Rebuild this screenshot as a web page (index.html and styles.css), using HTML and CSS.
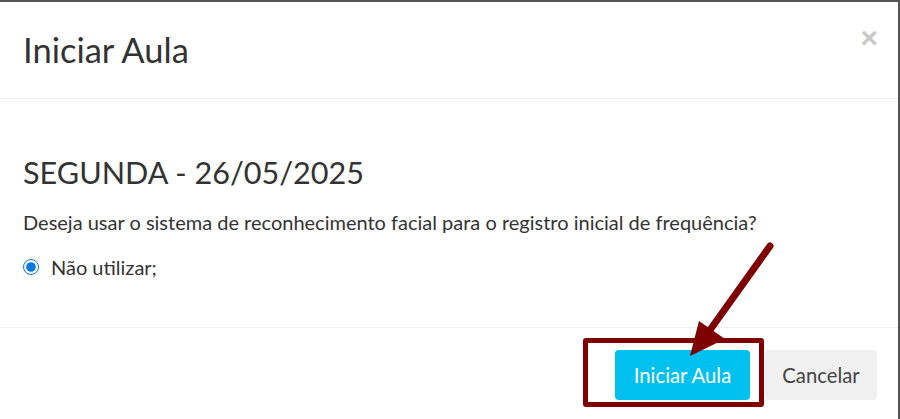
FILE: index.html
```html
<!DOCTYPE html>
<html>
<head>
  <title>Iniciar Aula</title>
  <link rel="stylesheet" href="styles.css">
</head>
<body>
  <div class="modal">
    <div class="modal-header">
      <h4 class="modal-title">Iniciar Aula</h4>
      <button class="close" type="button">&times;</button>
    </div>
    <div class="modal-body">
      <h3 class="day-title">SEGUNDA - 26/05/2025</h3>
      <p class="question">Deseja usar o sistema de reconhecimento facial para o registro inicial de frequência?</p>
      <label class="radio-option">
        <input type="radio" name="facial" checked>
        <span>Não utilizar;</span>
      </label>
    </div>
    <div class="modal-footer">
      <button class="btn btn-info" type="button">Iniciar Aula</button>
      <button class="btn btn-default" type="button">Cancelar</button>
    </div>

    <!-- highlight drawn over the screenshot -->
    <div class="highlight-box"></div>
    <svg class="highlight-arrow" width="120" height="130" viewBox="0 0 120 130">
      <line x1="100" y1="16" x2="40" y2="100" stroke="#7f0000" stroke-width="7" stroke-linecap="round"/>
      <polygon points="20,126 29,91 55,109" fill="#7f0000"/>
    </svg>
  </div>
</body>
</html>
```

FILE: styles.css
```css
body {
  margin: 0;
  padding: 0;
  background-color: #fff;
  font-family: "Lato", "Liberation Sans", sans-serif;
  color: #333;
}

.modal {
  position: relative;
  width: 898px;
  height: 417px;
  border-top: 2px solid #555;
  border-right: 2px solid #555;
  background-color: #fff;
}

.modal-header {
  display: flex;
  justify-content: space-between;
  align-items: flex-start;
  height: 96px;
  padding: 0 23px;
  border-bottom: 1px solid #f0f0f0;
}

.modal-title {
  margin: 0;
  padding-top: 28px;
  font-size: 34.5px;
  font-weight: normal;
  line-height: 40px;
  color: #333;
}

.close {
  margin-top: 21px;
  margin-right: -3px;
  padding: 0;
  border: none;
  background: none;
  font-family: "Liberation Sans", sans-serif;
  font-size: 30px;
  font-weight: bold;
  line-height: 30px;
  color: #c8c8c8;
  cursor: pointer;
}

.modal-body {
  height: 228px;
  padding: 0 23px;
  border-bottom: 1px solid #f0f0f0;
}

.day-title {
  margin: 0;
  padding-top: 54px;
  font-size: 30.6px;
  font-weight: normal;
  line-height: 40px;
}

.question {
  margin: 16px 0 0;
  font-size: 20px;
  line-height: 26px;
}

.radio-option {
  display: flex;
  align-items: center;
  gap: 12px;
  margin-top: 20px;
  font-size: 20px;
  line-height: 24px;
}

.radio-option input {
  width: 16px;
  height: 16px;
  margin: 0;
  accent-color: #0a77e0;
}

.modal-footer {
  display: flex;
  justify-content: flex-end;
  gap: 15px;
  padding: 22px 21px 0;
}

.btn {
  height: 50px;
  padding: 0;
  border: none;
  border-radius: 4px;
  font-family: "Lato", "Liberation Sans", sans-serif;
  font-size: 20.3px;
  cursor: pointer;
}

.btn-info {
  width: 135px;
  background-color: #00c0ef;
  color: #fff;
}

.btn-default {
  width: 112px;
  background-color: #f0f0f0;
  color: #444;
}

.highlight-box {
  position: absolute;
  left: 583px;
  top: 336px;
  width: 171px;
  height: 59px;
  border: 5px solid #800000;
  border-radius: 3px;
}

.highlight-arrow {
  position: absolute;
  left: 670px;
  top: 228px;
}
```
